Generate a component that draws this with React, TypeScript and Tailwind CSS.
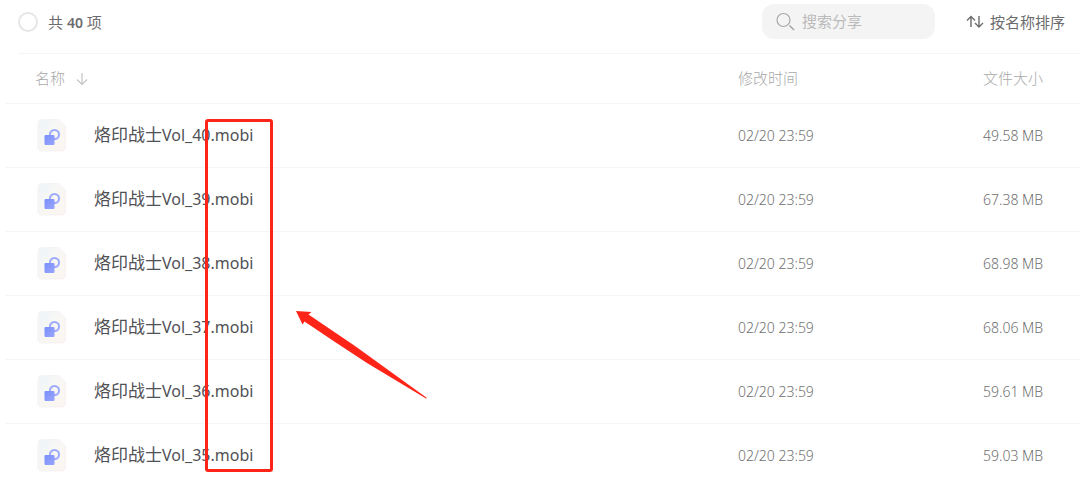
import React, { useState } from "react";

interface FileItem {
  volume: number;
  modified: string;
  size: string;
}

const files: FileItem[] = [
  { volume: 40, modified: "02/20 23:59", size: "49.58 MB" },
  { volume: 39, modified: "02/20 23:59", size: "67.38 MB" },
  { volume: 38, modified: "02/20 23:59", size: "68.98 MB" },
  { volume: 37, modified: "02/20 23:59", size: "68.06 MB" },
  { volume: 36, modified: "02/20 23:59", size: "59.61 MB" },
  { volume: 35, modified: "02/20 23:59", size: "59.03 MB" },
];

const SearchIcon: React.FC = () => (
  <svg
    className="shrink-0"
    width="20"
    height="20"
    viewBox="0 0 20 20"
    fill="none"
    stroke="#a8a8a8"
    strokeWidth="1.2"
  >
    <circle cx="7.500" cy="8" r="6.500" />
    <path d="M13.500 13.500l4.500 4.500" strokeWidth="1.6" />
  </svg>
);

const SortIcon: React.FC = () => (
  <svg width="18" height="14" viewBox="0 0 18 14" fill="none" stroke="#6c6c6e" strokeWidth="1.4">
    <path d="M5 12V1.500M1 5.500l4-4 4 4" />
    <path d="M13 1v11M9 8l4 4 4-4" />
  </svg>
);

const ArrowDownIcon: React.FC = () => (
  <svg width="12" height="14" viewBox="0 0 12 14" fill="none" stroke="#c4c4c4" strokeWidth="1.2">
    <path d="M6 1v11.500M1 7.500l5 5 5-5" />
  </svg>
);

const FileIcon: React.FC = () => (
  <svg className="shrink-0" width="30" height="34" viewBox="0 0 30 34" fill="none">
    <defs>
      <linearGradient id="page" x1="0" y1="0" x2="1" y2="1">
        <stop offset="0" stopColor="#eef5fb" />
        <stop offset="0.5" stopColor="#f8f7f4" />
        <stop offset="1" stopColor="#fcf5f1" />
      </linearGradient>
      <linearGradient id="block" x1="0" y1="0" x2="1" y2="1">
        <stop offset="0" stopColor="#7890fb" />
        <stop offset="1" stopColor="#9ba4fd" />
      </linearGradient>
    </defs>
    <path
      d="M5 .5h15.500c1 0 1.600.3 2.300 1l5 5.200c.6.700.9 1.300.9 2.200V28a4 4 0 0 1-4 4H5a4 4 0 0 1-4-4V4.500a4 4 0 0 1 4-4z"
      fill="url(#page)"
      stroke="#f5f2f1"
    />
    <circle cx="17.500" cy="15.500" r="4.500" stroke="#9aabfb" strokeWidth="2" />
    <rect x="7.500" y="16" width="10" height="10" rx="1" fill="url(#block)" />
  </svg>
);

const Toolbar: React.FC = () => {
  const [query, setQuery] = useState("");

  return (
    <div className="ml-[18px] flex h-[54px] items-start border-b border-[#f5f5f5] pr-[15px] pt-1">
      <label className="flex h-9 items-center gap-[10px] text-[15px] text-[#6c6c6e]">
        <input
          type="checkbox"
          className="size-5 appearance-none rounded-full border-2 border-[#e6e6e6] checked:bg-[#7890fb]"
        />
        <span>
          共 <b className="text-sm font-semibold">40</b> 项
        </span>
      </label>
      <label className="ml-auto flex h-[35px] w-[173px] items-center gap-[6px] rounded-xl bg-[#f4f4f4] pl-[14px]">
        <SearchIcon />
        <input
          type="text"
          aria-label="搜索分享"
          placeholder="搜索分享"
          value={query}
          onChange={(e) => setQuery(e.target.value)}
          className="w-full min-w-0 bg-transparent text-[15px] text-[#616161] outline-none placeholder:text-[#bababa]"
        />
      </label>
      <button type="button" className="ml-[31px] flex h-9 items-center gap-[6px] text-[15px] text-[#6c6c6e]">
        <SortIcon />
        按名称排序
      </button>
    </div>
  );
};

const FileRow: React.FC<{ file: FileItem }> = ({ file }) => (
  <tr className="h-16 text-sm font-light text-[#6f6f6f]">
    <td className="border-b border-[#f5f5f5] pl-[31px]">
      <div className="flex items-center gap-[27px] text-[17px] font-normal text-[#505155]">
        <FileIcon />
        <span>
          烙印战士<span className="text-base">Vol_{file.volume}.mobi</span>
        </span>
      </div>
    </td>
    <td className="border-b border-[#f5f5f5]">{file.modified}</td>
    <td className="border-b border-[#f5f5f5]">{file.size}</td>
  </tr>
);

const App: React.FC = () => {
  return (
    <div className="relative overflow-hidden bg-white font-['Noto_Sans','Noto_Sans_CJK_SC',sans-serif]">
      <Toolbar />
      <div className="pl-[6px]">
        <table className="w-full table-fixed border-separate border-spacing-0 text-left">
          <thead>
            <tr className="h-[50px] text-[15px] text-[#a8a8a8]">
              <th className="border-b border-[#f5f5f5] pl-[29px] font-light">
                <button type="button" className="flex items-center gap-[11px]">
                  名称
                  <ArrowDownIcon />
                </button>
              </th>
              <th className="w-[245px] border-b border-[#f5f5f5] font-light">修改时间</th>
              <th className="w-[97px] border-b border-[#f5f5f5] font-light">文件大小</th>
            </tr>
          </thead>
          <tbody>
            {files.map((file) => (
              <FileRow key={file.volume} file={file} />
            ))}
          </tbody>
        </table>
      </div>

      {/* red markup over the file extensions */}
      <div className="pointer-events-none absolute left-[205px] top-[119px] h-[353px] w-[68px] rounded-[3px] border-3 border-[#ff2418]" />
      <svg
        className="pointer-events-none absolute left-[295px] top-[310px]"
        width="134"
        height="90"
        viewBox="0 0 134 90"
        fill="#ff2418"
      >
        <path d="M1 1L16.500 2L13.500 4.500L60 36L132 88L131 88.500L72 53L40 32L9.500 11.500L7.500 14.500Z" />
      </svg>
    </div>
  );
};

export default App;
